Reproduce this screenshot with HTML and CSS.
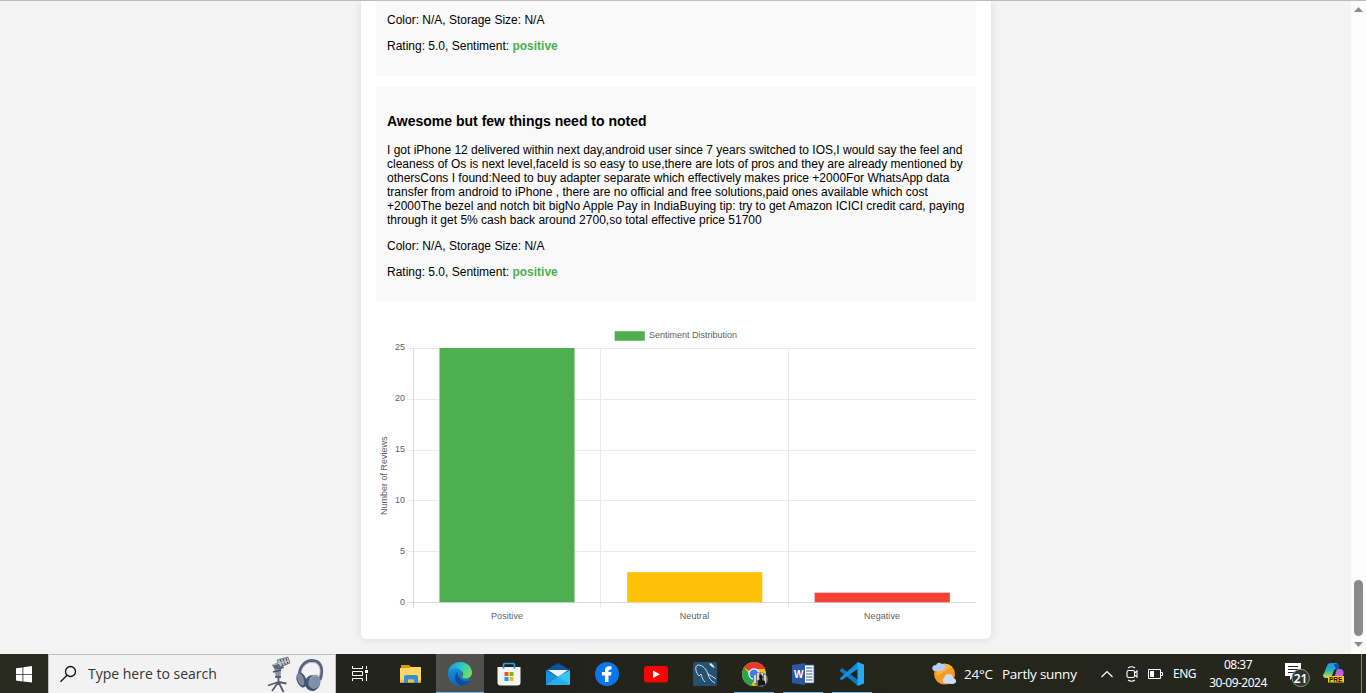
FILE: index.html
```html
<!DOCTYPE html>
<html lang="en">
<head>
<meta charset="utf-8">
<title>Sentiment Analysis</title>
<link rel="stylesheet" href="styles.css">
</head>
<body>
<div class="screen">
<div class="browser">
  <main class="page">
    <section class="card">
      <article class="review review-first">
        <p>Color: N/A, Storage Size: N/A</p>
        <p>Rating: 5.0, Sentiment: <b class="positive">positive</b></p>
      </article>
      <article class="review">
        <h3>Awesome but few things need to noted</h3>
        <p>I got iPhone 12 delivered within next day,android user since 7 years switched to IOS,I would say the feel and<br>cleaness of Os is next level,faceId is so easy to use,there are lots of pros and they are already mentioned by<br>othersCons I found:Need to buy adapter separate which effectively makes price +2000For WhatsApp data<br>transfer from android to iPhone , there are no official and free solutions,paid ones available which cost<br>+2000The bezel and notch bit bigNo Apple Pay in IndiaBuying tip: try to get Amazon ICICI credit card, paying<br>through it get 5% cash back around 2700,so total effective price 51700</p>
        <p>Color: N/A, Storage Size: N/A</p>
        <p>Rating: 5.0, Sentiment: <b class="positive">positive</b></p>
      </article>
      <svg class="chart" viewBox="376 313 600 311" width="600" height="311">
        <g class="grid">
          <path d="M407 348.500H976M407 399.500H976M407 450.500H976M407 500.500H976M407 551.500H976M600.500 348V608M788.500 348V608"/>
          <path class="axis" d="M413.500 348V608M407 602.500H976"/>
        </g>
        <rect class="green-edge" x="439" y="348" width="136" height="254.500"/><rect class="green" x="440" y="348" width="134" height="254"/>
        <rect class="yellow-edge" x="627" y="572" width="135.500" height="30.500"/><rect class="yellow" x="627.500" y="572.500" width="134.500" height="29.500"/>
        <rect class="red-edge" x="814.500" y="592.500" width="135.500" height="10"/><rect class="red" x="815" y="593" width="134.500" height="9"/>
        <rect class="green-edge" x="614.500" y="331" width="30.500" height="10"/><rect class="green" x="615" y="331.500" width="29.500" height="9"/>
        <g class="labels">
          <text x="649" y="338" textLength="88">Sentiment Distribution</text>
          <g text-anchor="end"><text x="405" y="350">25</text><text x="405" y="401">20</text><text x="405" y="452">15</text><text x="405" y="503">10</text><text x="405" y="554">5</text><text x="405" y="605">0</text></g>
          <g text-anchor="middle"><text x="507" y="619" textLength="32">Positive</text><text x="694.500" y="619" textLength="29.500">Neutral</text><text x="882" y="619" textLength="36">Negative</text></g>
          <text transform="translate(387 515) rotate(-90)" textLength="78.500">Number of Reviews</text>
        </g>
      </svg>
    </section>
  </main>
  <aside class="scrollbar">
    <svg width="15" height="14"><path d="M3 11L7.500 6L12 11Z"/></svg>
    <div class="thumb"></div>
    <svg width="15" height="18"><path d="M3 6H12L7.500 11Z"/></svg>
  </aside>
</div>
<footer class="taskbar">
  <div class="start"><svg width="16" height="17" viewBox="0 0 16 17"><path fill="#fff" d="M0 2.300L6.500 1.400V8H0ZM7.300 1.200L16 0V8H7.300ZM0 8.800H6.500V15.400L0 14.500ZM7.300 8.800H16V16.500L7.300 15.500Z"/></svg></div>
  <div class="search">
    <svg width="18" height="18" viewBox="0 0 18 18" fill="none" stroke="#111" stroke-width="1.300"><circle cx="10.500" cy="6.500" r="5"/><path d="M7 10.300L.500 16.700"/></svg>
    <span>Type here to search</span>
    <svg class="art" width="58" height="37" viewBox="267 655 58 37">
      <path d="M278.500 669V684M278.500 681L268 684.500M278.500 681L272 690M278.500 681L283.500 691M278.500 681L286.500 682.500" fill="none" stroke="#545b6e" stroke-width="1.800"/>
      <path d="M272 664L281 660L284 667L276 670Z" fill="#5d667f"/><path d="M274.500 668H281L280.500 677H276Z" fill="#8790a5"/><path d="M273 671L281 669M275 676H281" stroke="#454e66" stroke-width="1.500"/>
      <path d="M277 659L288 656L290 662L280 666Z" fill="#c0c0be" stroke="#666c77" stroke-width=".8"/><path d="M280 658L283 665M283 657.500L285.500 664M286 657L288 663" stroke="#444c5b" stroke-width="1"/><path d="M273 664L288 660" stroke="#c4cad5" stroke-width="1"/>
      <path d="M299.500 675C299 666 305 659.500 312 659.500C320.500 659.500 324 667 320 679" fill="none" stroke="#59647b" stroke-width="3"/><path d="M301 673C301 667 306 661.500 312 661.500C318 661.500 321 666 320 674" fill="none" stroke="#a6b2c7" stroke-width=".8"/>
      <ellipse cx="301.500" cy="679" rx="4.700" ry="7.700" transform="rotate(-20 301.500 679)" fill="#45526e"/><ellipse cx="300.700" cy="678.500" rx="3" ry="6.500" transform="rotate(-20 300.700 678.500)" fill="#7d89a1"/>
      <ellipse cx="312.500" cy="682" rx="7.500" ry="8" transform="rotate(20 312.500 682)" fill="#465471"/><ellipse cx="314.500" cy="681" rx="6" ry="7" transform="rotate(20 314.500 681)" fill="#8190aa"/><path d="M310 678Q314 672 319 675" fill="none" stroke="#acb8ca"/>
    </svg>
  </div>
  <nav class="apps">
    <div class="app taskview"><svg viewBox="0 0 24 24" fill="none" stroke="#fff" stroke-width="1"><path d="M4.500 4V6.500H14.500V4M4.500 19V16.500H14.500V19M4.500 9.500H14.500V13.500H4.500ZM18.500 4V7M18.500 12V19"/><path d="M17 8H20V11H17Z" fill="#fff" stroke="none"/></svg></div>
    <div class="app"><svg viewBox="0 0 24 24"><path fill="#dc9700" d="M2 3H10L12 5V9H2Z"/><path fill="#ffd564" d="M1 6H10L12 5H22V20.500H1Z"/><path fill="#f5c142" d="M1 18H22V20.500H1Z"/><path fill="#328ed0" d="M7 13H17Q19 13 19 15V21H15V17.500H9V21H5V15Q5 13 7 13Z"/></svg></div>
    <div class="app active"><svg viewBox="0 0 24 24"><defs><linearGradient id="edge-top" x1="0" x2="1" y1=".2" y2=".6"><stop stop-color="#1698d5"/><stop offset=".5" stop-color="#35c4c4"/><stop offset="1" stop-color="#6de35d"/></linearGradient><linearGradient id="edge-low" y2="1" x2="0"><stop stop-color="#1399dc"/><stop offset="1" stop-color="#1264b8"/></linearGradient></defs><path fill="url(#edge-low)" d="M0 12C0 4 6 3 12 6C16 9 13 13 14 15C16 18 22 16 22.500 17.500C20 22 16 24 12 24C5 24 0 19 0 12Z"/><path fill="url(#edge-top)" d="M.3 9.500C2-2.800 22-3.800 24 10C24 16 19 17.500 15 16C12.500 15 15.500 14 15 11.500C13.500 5 3.500 5 .3 9.500Z"/><path fill="#0c4e9c" d="M9.500 9.500C6 12 6 22 13 23.900C17 23.500 20 21.500 22.300 18.500C15 21 9 16 9.500 9.500Z"/></svg></div>
    <div class="app"><svg viewBox="0 0 24 24"><path d="M6.500 6V3Q6.500 1.500 8 1.500H16Q17.500 1.500 17.500 3V6" fill="none" stroke="#1ba8e5" stroke-width="1.700"/><path fill="#f4f4f4" d="M.5 5H23.500V20.500Q23.500 23.500 20.500 23.500H3.500Q.5 23.500 .5 20.500Z"/><path d="M6.500 5V6.500M17.500 5V6.500" stroke="#1385bd" stroke-width="1.700"/><path fill="#f25022" d="M7.500 10H11.500V14H7.500Z"/><path fill="#7fba00" d="M12.500 10H16.500V14H12.500Z"/><path fill="#00a4ef" d="M7.500 15H11.500V19H7.500Z"/><path fill="#ffb900" d="M12.500 15H16.500V19H12.500Z"/></svg></div>
    <div class="app"><svg viewBox="0 0 24 24"><path fill="#0754a3" d="M0 8L12 1L24 8L12 17Z"/><path fill="#edf4fb" d="M2 8H22L12 15Z"/><path fill="#35c5f3" d="M24 8V23H0L12 14.500Z"/><path fill="#1593e1" d="M0 8L24 23H0Z"/><path fill="#2aaeea" d="M0 23L12 15L24 23Z"/></svg></div>
    <div class="app"><svg viewBox="0 0 24 24"><circle cx="12" cy="12" r="12" fill="#0877ee"/><path fill="#fff" d="M10 20V13.500H7V10H10V8Q10 4.200 14 4.200H16.500V7.500H15Q13.500 7.500 13.500 9V10H16.500L16 13.500H13.500V20Z"/></svg></div>
    <div class="app"><svg viewBox="0 0 24 24"><rect y="4" width="24" height="16.500" rx="3" fill="#f00"/><path fill="#fff" d="M9 8.500L16 12.200L9 16Z"/></svg></div>
    <div class="app"><svg viewBox="0 0 24 24"><rect width="24" height="24" rx="2" fill="#24516f"/><path d="M1 12L12 0M0 24L24 4" stroke="#347294" opacity=".35"/><path d="M6 14C3 11 1 4 5 3C10 3 13 7 15 12L20 15M6 14L8 12C9 16 10 18 12 20M15 12C16 16 18 19 22 21M20 15L23 17" fill="none" stroke="#e1eef4" stroke-width=".9"/><path d="M16 2L19 5L22 6L20 3L18 1Z" fill="#dbe9ef"/></svg></div>
    <div class="app open"><svg viewBox="0 0 26 25" class="wide"><circle cx="12" cy="12" r="12" fill="#fbc116"/><path fill="#e33b2e" d="M12 12L2 5.500C7-2 19-2 23.500 7H12Z"/><path fill="#2ca24c" d="M2 5.500L12 18L9 24C0 21 -2 12 2 5.500Z"/><circle cx="12" cy="12" r="5.700" fill="#fff"/><circle cx="12" cy="12" r="4.500" fill="#3d7eea"/><circle cx="18.500" cy="17.500" r="7.300" fill="#777"/><path d="M13 13V21M16 11V18M20 11V17M23 13V21" stroke="#eee" stroke-width="1.500"/><path fill="#171717" d="M16 24V19L18 17L17 14L19 12L21 15L20 18L23 19V23Z"/></svg></div>
    <div class="app open"><svg viewBox="0 0 24 24"><path fill="#fff" stroke="#315aa1" stroke-width=".8" d="M12 3H23V21H12Z"/><path d="M15 6H21.500M15 9H21.500M15 12H21.500M15 15H21.500M15 18H21.500" stroke="#315aa1" stroke-width="1.200"/><path fill="#2d579f" d="M1 3L14 1V23L1 21Z"/><text x="3" y="16" class="word">W</text></svg></div>
    <div class="app open"><svg viewBox="0 0 24 24"><path fill="#0879c4" d="M0 8L2 6L18 18V24L0 9Z"/><path fill="#1490df" d="M0 16L18 0L19 6L2 18L0 17Z"/><path fill="#29a9f2" d="M17.500 0L24 2.500V21.500L17.500 24Z"/></svg></div>
  </nav>
  <div class="weather"><svg width="24" height="24" viewBox="0 0 24 24"><circle cx="12.500" cy="12" r="10.500" fill="#f49b25"/><path fill="#f8b43d" d="M4 6Q12-2 20 5L5 14Z"/><path fill="#b4cdf4" d="M2 9Q-1 7 1 4Q2 3 4 3Q6-1 10 2Q14 3 13 6Q12 9 8 9Z"/><path fill="#cbdcf8" d="M12 21Q9 18 12 16Q13 12 17 12Q21 12 21 16Q25 17 24 20Q23 22 19 22Z"/></svg><span class="temp">24°C</span><span class="sky">Partly sunny</span></div>
  <div class="tray">
    <svg width="12" height="8" viewBox="0 0 12 8"><path d="M.5 7L6 1.500L11.500 7" fill="none" stroke="#fff" stroke-width="1.200"/></svg>
    <svg class="meet" width="12" height="16" viewBox="0 0 12 16" fill="none" stroke="#fff" stroke-width="1.100"><rect x="1" y="4.500" width="7.500" height="7" rx="1.500"/><path d="M8.500 7L11 5V11L8.500 9M2 2Q5.500-.5 9 2M2 14Q5.500 16.500 9 14"/></svg>
    <svg class="battery" width="16" height="10" viewBox="0 0 16 10"><path d="M.5.500H12.500V9.500H.500ZM12.500 3.500H14.500V6.500H12.500" fill="none" stroke="#fff"/><path fill="#fff" d="M2 2H6V8H2Z"/></svg>
    <span class="lang">ENG</span>
  </div>
  <div class="clock"><span class="time">08:37</span><span class="date">30-09-2024</span></div>
  <svg class="notice" width="26" height="26" viewBox="0 0 26 26"><path fill="#fff" d="M0 2H16V15H9L5 19V15H0Z"/><path d="M3 5.500H13M3 8.500H13M3 11.500H9" stroke="#25261d"/><circle cx="15.700" cy="17" r="8.700" fill="#333630" stroke="#8c8d88"/><text x="15.500" y="21.500" text-anchor="middle">21</text></svg>
  <svg class="copilot" width="22" height="22" viewBox="0 0 22 22"><defs><linearGradient id="pilot-left" x2="0" y2="1"><stop stop-color="#238bf1"/><stop offset=".5" stop-color="#23b5bc"/><stop offset="1" stop-color="#d8db39"/></linearGradient><linearGradient id="pilot-right" x2="0" y2="1"><stop stop-color="#8a6cf3"/><stop offset=".5" stop-color="#c960db"/><stop offset="1" stop-color="#ef698c"/></linearGradient></defs><path fill="url(#pilot-left)" d="M5 1Q6 0 8 0H13Q16 0 16 6H13Q11 6 10 10L8 15H3Q0 15 0 12Q2 9 3 5Z"/><path fill="url(#pilot-right)" d="M14 6H18Q21 7 20.500 11L19 15H9Q12 14 13 9Z"/><path fill="#1749b1" d="M11 1H14Q16 2 16 6H13Q12 5 11 1Z"/><rect x="5" y="13" width="16" height="6.500" fill="#ffce16"/><text x="6" y="18.600">PRE</text></svg>
  <div class="desktop-edge"></div>
</footer>
</div>
</body>
</html>
```
FILE: styles.css
```css
* { box-sizing: border-box; }
body { margin: 0; overflow: hidden; font-family: "Liberation Sans", Arial, sans-serif; }
svg { display: block; flex: none; }
.screen { width: 1366px; height: 693px; display: flex; flex-direction: column; }
.browser { height: 654px; display: flex; border-top: 1px solid #bdbdbd; }
.page { width: 1351px; height: 653px; padding-left: 361px; background: #f3f3f3; overflow: hidden; }
.card { width: 630px; height: 638px; padding: 0 15px 15px; background: #fff; border-radius: 0 0 6px 6px; box-shadow: 0 0 8px rgba(0,0,0,.1); }
.review { background: #f9f9f9; padding: 11px; border-radius: 3px; height: 215px; margin-bottom: 11px; overflow: hidden; }
.review-first { height: 75px; padding-top: 0; border-radius: 0 0 3px 3px; }
.review p { font-size: 12px; line-height: 14px; margin: 12px 0; white-space: nowrap; }
.review h3 { font-size: 14px; line-height: 16px; margin: 15px 0 14px; }
.positive { color: #4caf50; }
.grid path { fill: none; stroke: #e9e9e9; }
.grid .axis { stroke: #dadada; }
.green { fill: #4caf50; } .green-edge { fill: #a0d4a2; }
.yellow { fill: #ffc107; } .yellow-edge { fill: #ffd85c; }
.red { fill: #f44336; } .red-edge { fill: #f77d74; }
.labels { font-size: 9px; fill: #606060; }
.scrollbar { width: 15px; background: #fcfcfc; display: flex; flex-direction: column; }
.scrollbar path { fill: #8b8b8b; }
.thumb { width: 9px; height: 56px; margin: auto 0 0 3px; border-radius: 5px; background: #8b8b8b; }
.taskbar { height: 39px; display: flex; align-items: center; background: linear-gradient(90deg, #292b20, #21221d 35%, #24251a 55%, #24251c 80%, #27281c); color: #fff; font-family: "Noto Sans", "Open Sans", sans-serif; }
.start { width: 48px; padding-top: 1px; display: flex; justify-content: center; }
.search { width: 288px; height: 39px; display: flex; align-items: center; background: #f2f2f2; border: 1px solid #bfbfbf; border-bottom: 0; padding-left: 11px; color: #333; }
.search span { width: 189px; flex: none; padding-left: 10px; font-family: "Open Sans", sans-serif; font-size: 14px; line-height: 20px; white-space: nowrap; }
.apps { width: 541px; height: 39px; display: flex; gap: 1px; }
.app { width: 48px; height: 39px; padding-top: 8px; display: flex; justify-content: center; flex: none; }
.app svg { width: 24px; height: 24px; }
.app svg.wide { width: 26px; height: 25px; margin-left: 2px; }
.taskview { margin-right: 2px; }
.active { background: #50504d; border-bottom: 1px solid #76b9ed; }
.open { background: linear-gradient(#76b9ed, #76b9ed) center bottom / 40px 1px no-repeat; }
.word { fill: #fff; font: bold 10px "Liberation Sans", sans-serif; }
.weather { display: flex; align-items: center; margin-left: 55px; width: 150px; font-family: "Open Sans", sans-serif; font-size: 13.500px; white-space: nowrap; }
.temp { width: 38px; margin-left: 8px; letter-spacing: -.2px; }
.sky { letter-spacing: -.25px; }
.tray { display: flex; align-items: center; width: 114px; margin-left: 19px; }
.meet { margin-left: 13px; } .battery { margin-left: 10px; }
.lang { margin-left: 9px; font-size: 12px; letter-spacing: -.5px; }
.clock { width: 70px; margin-left: -12px; display: flex; flex-direction: column; align-items: center; font-size: 12px; line-height: 18px; letter-spacing: -.5px; white-space: nowrap; }
.notice { margin-left: 12px; } .notice text { fill: #fff; font-size: 12px; font-weight: 600; }
.copilot { margin-left: 12px; } .copilot text { font: bold 6.500px "Liberation Sans", sans-serif; fill: #111; }
.desktop-edge { width: 1px; height: 39px; margin-left: auto; margin-right: 4px; background: #858680; }
```
